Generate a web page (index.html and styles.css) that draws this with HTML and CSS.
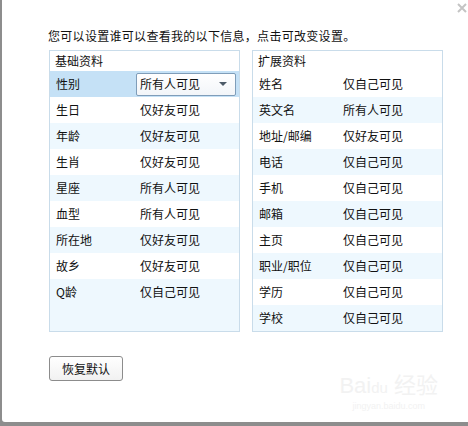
FILE: index.html
```html
<!DOCTYPE html>
<html lang="zh-CN">
<head>
  <meta charset="UTF-8">
  <title>隐私设置</title>
  <link rel="stylesheet" href="styles.css">
</head>
<body>
  <div class="dialog">
    <!-- 关闭按钮 -->
    <div class="topbar">
      <svg class="close" width="10" height="10" viewBox="0 0 10 10">
        <path d="M1 1 L9 9 M9 1 L1 9" stroke="#c4c4c4" stroke-width="2" fill="none"/>
      </svg>
    </div>

    <p class="intro">您可以设置谁可以查看我的以下信息，点击可改变设置。</p>

    <div class="panels">
      <div class="panel">
        <div class="panel-head">基础资料</div>
        <div class="row selected">
          <span class="label">性别</span>
          <div class="select">
            <span>所有人可见</span>
            <span class="arrow"></span>
          </div>
        </div>
        <div class="row"><span class="label">生日</span><span class="value">仅好友可见</span></div>
        <div class="row alt"><span class="label">年龄</span><span class="value">仅好友可见</span></div>
        <div class="row"><span class="label">生肖</span><span class="value">仅好友可见</span></div>
        <div class="row alt"><span class="label">星座</span><span class="value">所有人可见</span></div>
        <div class="row"><span class="label">血型</span><span class="value">所有人可见</span></div>
        <div class="row alt"><span class="label">所在地</span><span class="value">仅好友可见</span></div>
        <div class="row"><span class="label">故乡</span><span class="value">仅好友可见</span></div>
        <div class="row alt"><span class="label">Q龄</span><span class="value">仅自己可见</span></div>
      </div>

      <div class="panel">
        <div class="panel-head">扩展资料</div>
        <div class="row"><span class="label">姓名</span><span class="value">仅自己可见</span></div>
        <div class="row alt"><span class="label">英文名</span><span class="value">所有人可见</span></div>
        <div class="row"><span class="label">地址/邮编</span><span class="value">仅好友可见</span></div>
        <div class="row alt"><span class="label">电话</span><span class="value">仅自己可见</span></div>
        <div class="row"><span class="label">手机</span><span class="value">仅自己可见</span></div>
        <div class="row alt"><span class="label">邮箱</span><span class="value">仅自己可见</span></div>
        <div class="row"><span class="label">主页</span><span class="value">仅自己可见</span></div>
        <div class="row alt"><span class="label">职业/职位</span><span class="value">仅自己可见</span></div>
        <div class="row"><span class="label">学历</span><span class="value">仅自己可见</span></div>
        <div class="row alt"><span class="label">学校</span><span class="value">仅自己可见</span></div>
      </div>
    </div>

    <button class="reset">恢复默认</button>

    <!-- 水印 -->
    <div class="watermark">
      <div class="wm-logo">Bai<span class="wm-paw">du</span> 经验</div>
      <div class="wm-url">jingyan.baidu.com</div>
    </div>
  </div>
</body>
</html>
```

FILE: styles.css
```css
body {
  margin: 0;
  background-color: #8d8d8d;
  font-family: "Noto Sans CJK SC", "Noto Sans", sans-serif;
  font-size: 12px;
  color: #111;
}
.dialog {
  position: relative;
  margin-left: 2px;
  height: 422px;
  background: #fff;
  border-bottom-left-radius: 3px;
  padding-left: 47px;
  box-sizing: border-box;
}
.topbar {
  height: 28px;
  display: flex;
  justify-content: flex-end;
  align-items: flex-start;
}
.close {
  margin: 3px 1px 0 0;
}
.intro {
  margin: 0 0 6px -1px;
  line-height: 16px;
  letter-spacing: 0.3px;
}
.panels {
  display: flex;
  gap: 12px;
}
.panel {
  width: 191px;
  height: 282px;
  box-sizing: border-box;
  border: 1px solid #c9dcea;
  background: #eef8fe;
}
.panel-head {
  height: 20px;
  line-height: 20px;
  padding-left: 5px;
  background: #fff;
}
.row {
  display: flex;
  align-items: center;
  height: 26px;
  padding-left: 6px;
  background: #fff;
}
.row.alt {
  background: #eef8fe;
}
.row.selected {
  background: #c5e1f6;
}
.label {
  width: 84px;
  line-height: 16px;
}
.value {
  line-height: 16px;
}
.select {
  margin-left: -4px;
  width: 100px;
  height: 23px;
  box-sizing: border-box;
  border: 1px solid #7f9db9;
  border-radius: 2px;
  background: linear-gradient(#ffffff, #f2f5f9);
  display: flex;
  align-items: center;
  justify-content: space-between;
  padding: 0 8px 0 3px;
  line-height: 16px;
}
.arrow {
  width: 0;
  height: 0;
  border-left: 4px solid transparent;
  border-right: 4px solid transparent;
  border-top: 4px solid #4c5a68;
}
.reset {
  display: block;
  margin-top: 24px;
  width: 74px;
  height: 25px;
  border: 1px solid #8c8c8c;
  border-radius: 3px;
  background: linear-gradient(#ffffff, #f1f1f1);
  font-family: inherit;
  font-size: 12px;
  color: #111;
  padding: 0;
}
.watermark {
  position: absolute;
  right: 30px;
  bottom: 10px;
  color: #f2f2f2;
  text-align: center;
}
.wm-logo {
  font-family: "Liberation Sans", sans-serif;
  font-size: 22px;
  line-height: 24px;
}
.wm-paw {
  font-size: 15px;
}
.wm-url {
  font-family: "Liberation Sans", sans-serif;
  font-size: 9px;
  line-height: 12px;
}
```
